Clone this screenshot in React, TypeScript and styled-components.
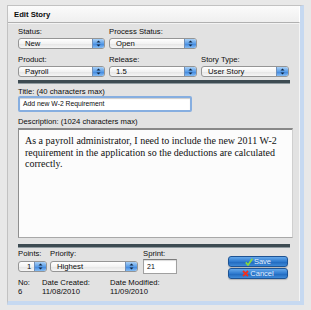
import styled, { createGlobalStyle } from "styled-components";

const GlobalStyle = createGlobalStyle`
  html, body {
    margin: 0;
    padding: 0;
    background: #e8e8e8;
  }
  body {
    font-family: "Liberation Sans", Arial, sans-serif;
    font-size: 7.7px;
    color: #0c0c0c;
  }
`;

const Page = styled.div`
  width: 311px;
  height: 310px;
  padding: 5px 0 0 7px;
  box-sizing: border-box;
`;

const Frame = styled.div`
  width: 297px;
  height: 300px;
  box-sizing: border-box;
  border-top: 1px solid #c2c2c2;
  border-left: 1px solid #c2c2c2;
  border-right: 4px solid #c6d9f1;
  border-bottom: 4px solid #c6d9f1;
  background: #e2e2e2;
  display: flex;
  flex-direction: column;
`;

const Header = styled.div`
  height: 16px;
  padding-left: 6px;
  display: flex;
  align-items: center;
  font-weight: bold;
  font-size: 7.7px;
  background: linear-gradient(#fbfbfb, #efefef);
  border-bottom: 1px solid #b0b0b0;
  border-right: 1px solid #fff;
`;

const Body = styled.div`
  flex: 1;
  padding-left: 10px;
  border-top: 1px solid #f3f3f3;
  border-right: 1px solid #f4f4f4;
  display: flex;
  flex-direction: column;
`;

const Row = styled.div<{ $mt?: number; $gap?: number }>`
  display: flex;
  gap: ${(p) => p.$gap ?? 4}px;
  margin-top: ${(p) => p.$mt ?? 0}px;
`;

const Field = styled.div<{ $w: number; $ml?: number; $mt?: number }>`
  width: ${(p) => p.$w}px;
  margin-left: ${(p) => p.$ml ?? 0}px;
  margin-top: ${(p) => p.$mt ?? 0}px;
  display: flex;
  flex-direction: column;
`;

const Label = styled.div<{ $mb?: number }>`
  font-size: 7.7px;
  line-height: 9px;
  height: 9px;
  margin-bottom: ${(p) => p.$mb ?? 2}px;
  white-space: nowrap;
`;

const SelectBox = styled.div`
  height: 11px;
  box-sizing: border-box;
  border: 1px solid #959595;
  border-radius: 3px;
  background: linear-gradient(#ffffff, #f3f3f3 50%, #e4e4e4 51%, #f6f6f6);
  display: flex;
  align-items: stretch;
  overflow: hidden;
`;

const SelectText = styled.span<{ $pl?: number }>`
  flex: 1;
  padding-left: ${(p) => p.$pl ?? 6}px;
  font-size: 7.7px;
  line-height: 9px;
  white-space: nowrap;
`;

const Stepper = styled.span`
  width: 11px;
  border-left: 1px solid #6f8fb9;
  background: linear-gradient(#a9d0f6, #5b9ee8 50%, #3a82dc 51%, #86bdf3);
  display: flex;
  align-items: center;
  justify-content: center;
`;

const Divider = styled.div<{ $mt: number }>`
  height: 3px;
  width: 272px;
  margin-top: ${(p) => p.$mt}px;
  background: #3d4b52;
  border-bottom: 1px solid #8e999e;
`;

const TitleInput = styled.div`
  width: 174px;
  height: 16px;
  box-sizing: border-box;
  border: 2px solid #86aee0;
  border-radius: 2px;
  background: #fff;
  font-size: 6.8px;
  line-height: 12px;
  padding-left: 3px;
  box-shadow: inset 0 1px 1px rgba(0, 0, 0, 0.2);
`;

const SprintInput = styled.div`
  width: 34px;
  height: 15px;
  box-sizing: border-box;
  border: 1px solid #a0a0a0;
  border-top-color: #7c7c7c;
  background: #fff;
  font-size: 7px;
  line-height: 13px;
  padding-left: 3px;
  box-shadow: inset 0 1px 1px rgba(0, 0, 0, 0.15);
`;

const TextArea = styled.div`
  width: 275px;
  height: 110px;
  box-sizing: border-box;
  background: #fcfcfc;
  border: 1px solid #a8a8a8;
  border-top: 2px solid #888;
  border-left-color: #8f8f8f;
  border-right-color: #cfcfcf;
  padding: 5px 6px 0 6px;
  font-family: "Liberation Serif", "Times New Roman", serif;
  font-size: 10px;
  line-height: 11.5px;
  color: #111;
`;

const BottomRow = styled.div`
  display: flex;
  margin-top: 1px;
`;

const BottomLeft = styled.div`
  display: flex;
  flex-direction: column;
  width: 210px;
`;

const Buttons = styled.div`
  display: flex;
  flex-direction: column;
  gap: 1px;
  padding-top: 7px;
`;

const Button = styled.div`
  width: 60px;
  height: 11px;
  box-sizing: border-box;
  border: 1px solid #1d5394;
  border-radius: 3px;
  background: linear-gradient(#65a8ea, #2f7bd0 50%, #1e66bc 51%, #3e8ad8);
  color: #e2efff;
  font-size: 7.5px;
  display: flex;
  align-items: center;
  justify-content: center;
  gap: 1px;
  box-shadow: 0 1px 1px rgba(0, 0, 0, 0.2);
`;

const InfoCol = styled.div<{ $w: number }>`
  width: ${(p) => p.$w}px;
  font-size: 7.7px;
  line-height: 9px;
  white-space: nowrap;
`;

const Arrows = () => (
  <svg width="5" height="7" viewBox="0 0 5 7">
    <path d="M0.5 2.6 L2.5 0.4 L4.5 2.6 Z M0.5 4.4 L2.5 6.6 L4.5 4.4 Z" fill="#0f2440" />
  </svg>
);

const Select = ({ value, pl }: { value: string; pl?: number }) => (
  <SelectBox>
    <SelectText $pl={pl}>{value}</SelectText>
    <Stepper>
      <Arrows />
    </Stepper>
  </SelectBox>
);

const Check = () => (
  <svg width="8" height="8" viewBox="0 0 8 8">
    <path d="M0.8 4.4 L3 7 L7.4 0.8" fill="none" stroke="#86d93e" strokeWidth="1.7" />
  </svg>
);

const Cross = () => (
  <svg width="7" height="7" viewBox="0 0 7 7">
    <path d="M1 1 L6 6 M6 1 L1 6" stroke="#f0301f" strokeWidth="1.8" />
  </svg>
);

export default function App() {
  return (
    <Page>
      <GlobalStyle />
      <Frame>
        <Header>Edit Story</Header>
        <Body>
          <Row $mt={3}>
            <Field $w={87}>
              <Label>Status:</Label>
              <Select value="New" />
            </Field>
            <Field $w={88}>
              <Label>Process Status:</Label>
              <Select value="Open" />
            </Field>
          </Row>
          <Row $mt={6}>
            <Field $w={87}>
              <Label>Product:</Label>
              <Select value="Payroll" />
            </Field>
            <Field $w={88}>
              <Label>Release:</Label>
              <Select value="1.5" />
            </Field>
            <Field $w={88}>
              <Label>Story Type:</Label>
              <Select value="User Story" />
            </Field>
          </Row>
          <Divider $mt={3} />
          <Field $w={180} $mt={3}>
            <Label $mb={0}>Title: (40 characters max)</Label>
            <TitleInput>Add new W-2 Requirement</TitleInput>
          </Field>
          <Field $w={280} $mt={5}>
            <Label>Description: (1024 characters max)</Label>
            <TextArea>
              As a payroll administrator, I need to include the new 2011 W-2
              requirement in the application so the deductions are calculated
              correctly.
            </TextArea>
          </Field>
          <Divider $mt={6} />
          <BottomRow>
            <BottomLeft>
              <Row $gap={3}>
                <Field $w={29}>
                  <Label $mb={3}>Points:</Label>
                  <Select value="1" pl={8} />
                </Field>
                <Field $w={88}>
                  <Label $mb={3}>Priority:</Label>
                  <Select value="Highest" />
                </Field>
                <Field $w={34} $ml={2}>
                  <Label $mb={1}>Sprint:</Label>
                  <SprintInput>21</SprintInput>
                </Field>
              </Row>
              <Row $mt={4} $gap={0}>
                <InfoCol $w={24}>
                  No:
                  <br />6
                </InfoCol>
                <InfoCol $w={68}>
                  Date Created:
                  <br />
                  11/08/2010
                </InfoCol>
                <InfoCol $w={80}>
                  Date Modified:
                  <br />
                  11/09/2010
                </InfoCol>
              </Row>
            </BottomLeft>
            <Buttons>
              <Button>
                <Check />
                Save
              </Button>
              <Button>
                <Cross />
                Cancel
              </Button>
            </Buttons>
          </BottomRow>
        </Body>
      </Frame>
    </Page>
  );
}
